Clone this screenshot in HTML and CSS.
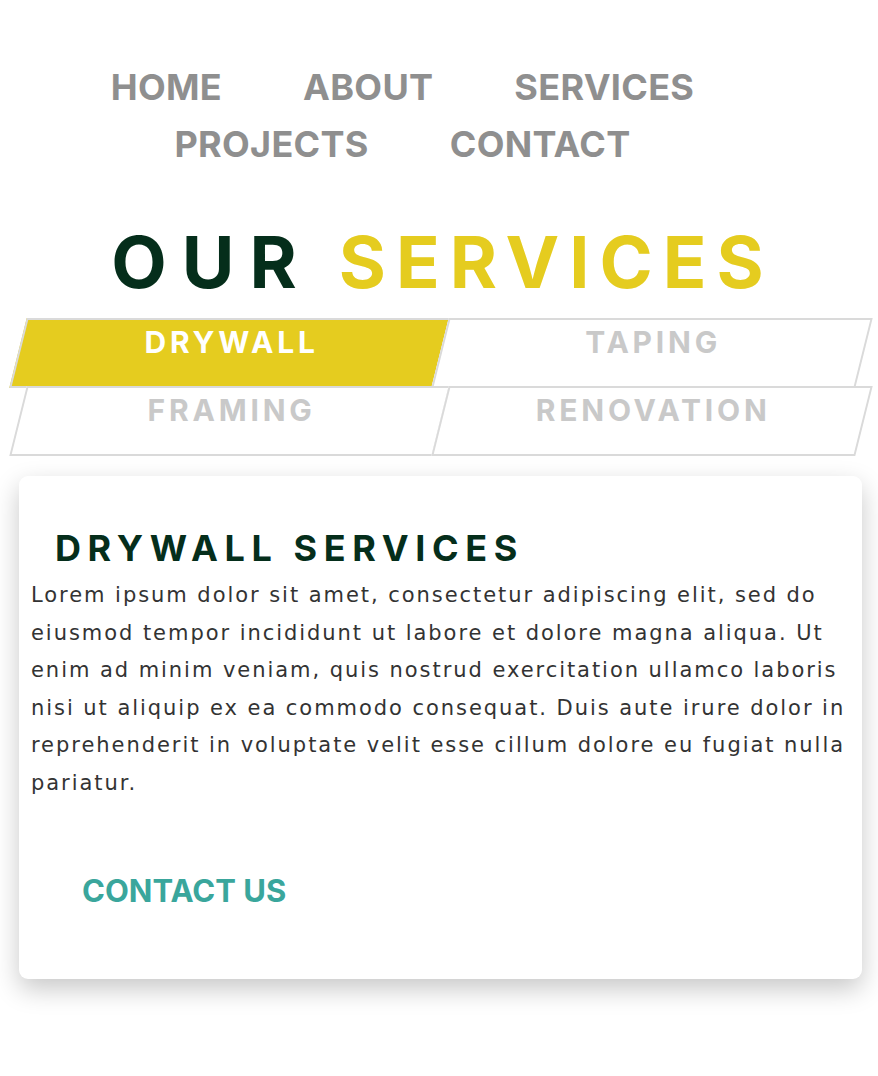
FILE: index.html
```html
<!DOCTYPE html>
<html lang="en">
<head>
<meta charset="utf-8">
<title>Our Services</title>
<link rel="stylesheet" href="styles.css">
</head>
<body>
<nav class="nav">
  <a class="nav-link" href="#">HOME</a>
  <a class="nav-link" href="#">ABOUT</a>
  <a class="nav-link" href="#">SERVICES</a>
  <a class="nav-link" href="#">PROJECTS</a>
  <a class="nav-link" href="#">CONTACT</a>
</nav>
<main class="wrap">
  <h1 class="title"><span class="title-dark">OUR</span> <span class="title-accent">SERVICES</span></h1>
  <div class="tabs">
    <div class="tab tab-active">DRYWALL</div>
    <div class="tab">TAPING</div>
    <div class="tab">FRAMING</div>
    <div class="tab">RENOVATION</div>
  </div>
  <section class="card">
    <h2 class="card-title">DRYWALL SERVICES</h2>
    <p class="card-text">Lorem ipsum dolor sit amet, consectetur adipiscing elit, sed do eiusmod tempor incididunt ut labore et dolore magna aliqua. Ut enim ad minim veniam, quis nostrud exercitation ullamco laboris nisi ut aliquip ex ea commodo consequat. Duis aute irure dolor in reprehenderit in voluptate velit esse cillum dolore eu fugiat nulla pariatur.</p>
    <a class="cta" href="#">CONTACT US</a>
  </section>
</main>
</body>
</html>
```
FILE: styles.css
```css
html, body {
  margin: 0;
  padding: 0;
  background: #ffffff;
}

body {
  font-family: "Inter", "DejaVu Sans", sans-serif;
}

.nav {
  display: flex;
  flex-wrap: wrap;
  justify-content: center;
  padding: 59px 0 0 8px;
}

.nav-link {
  font-family: "Inter", sans-serif;
  font-weight: 700;
  font-size: 36px;
  line-height: 57px;
  letter-spacing: 0.3px;
  color: #8f8f8f;
  text-decoration: none;
  margin-right: 81px;
}

.wrap {
  padding: 0 16px 98px 19px;
}

.title {
  margin: 49px 0 0;
  padding-left: 4px;
  text-align: center;
  font-family: "Inter", sans-serif;
  font-weight: 700;
  font-size: 72px;
  line-height: 80px;
  letter-spacing: 10px;
}

.title-dark {
  color: #052e1b;
  letter-spacing: 15px;
}

.title-accent {
  color: #e5cc1f;
}

.tabs {
  margin-top: 17px;
  display: grid;
  grid-template-columns: 1fr 1fr;
  grid-auto-rows: 68px;
}

.tab {
  position: relative;
  z-index: 0;
  box-sizing: border-box;
  padding-top: 5px;
  text-align: center;
  font-family: "Inter", sans-serif;
  font-weight: 700;
  font-size: 30px;
  line-height: 36px;
  letter-spacing: 3.8px;
  text-indent: 3.8px;
  color: #c9c9c9;
  cursor: pointer;
}

.tab::before {
  content: "";
  position: absolute;
  inset: -1px;
  z-index: -1;
  border: 2px solid #dadada;
  background: #ffffff;
  transform: skewX(-14deg);
}

.tab-active {
  color: #ffffff;
}

.tab-active::before {
  background: #e5cc1f;
}

.card {
  margin-top: 21px;
  background: #ffffff;
  border-radius: 9px;
  box-shadow: 0 10px 26px rgba(0, 0, 0, 0.22);
  padding: 50px 8px 68px 12px;
}

.card-title {
  margin: 0 0 7px;
  padding-left: 24px;
  font-family: "Inter", sans-serif;
  font-weight: 700;
  font-size: 36px;
  line-height: 44px;
  letter-spacing: 6.6px;
  color: #052e1b;
}

.card-text {
  margin: 0;
  font-family: "DejaVu Sans", sans-serif;
  font-size: 21px;
  line-height: 37.6px;
  letter-spacing: 1.95px;
  color: #333333;
}

.cta {
  display: inline-block;
  margin: 68px 0 0 51px;
  font-family: "Inter", sans-serif;
  font-weight: 700;
  font-size: 31px;
  line-height: 40px;
  color: #3aa69c;
  text-decoration: none;
}
```
